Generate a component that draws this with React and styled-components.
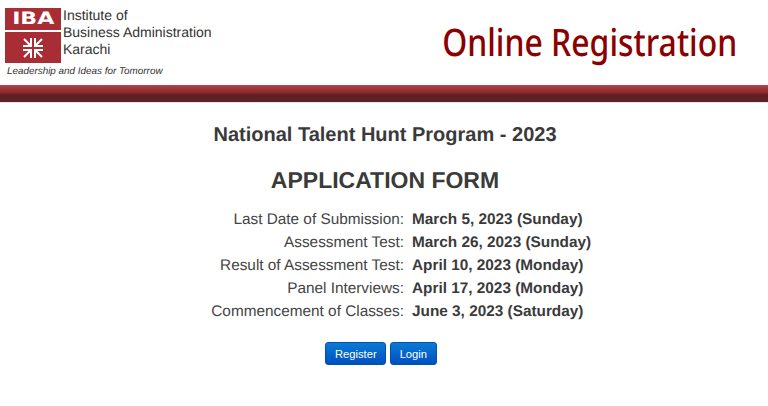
import React from 'react';
import styled, { createGlobalStyle } from 'styled-components';

const GlobalStyle = createGlobalStyle`
  html, body {
    margin: 0;
    padding: 0;
    background: #fff;
  }
  body {
    font-family: "Liberation Sans", Arial, sans-serif;
    color: #333;
    text-rendering: geometricPrecision;
  }
`;

const Page = styled.div`
  width: 768px;
  height: 406px;
  overflow: hidden;
  background: #fff;
`;

const Header = styled.header`
  height: 85px;
  display: flex;
  justify-content: space-between;
  box-sizing: border-box;
  padding: 8px 31px 0 5px;
`;

const Brand = styled.div`
  display: flex;
  flex-direction: column;
`;

const BrandTop = styled.div`
  display: flex;
  gap: 2px;
`;

const LogoMark = styled.div`
  width: 56px;
  height: 55px;
  display: flex;
  flex-direction: column;
  gap: 2px;
`;

const LogoName = styled.div`
  height: 22px;
  background: #a82d35;
  color: #fff;
  font-family: "DejaVu Sans", sans-serif;
  font-size: 17px;
  font-weight: 700;
  line-height: 23px;
  text-align: center;
`;

const LogoLetters = styled.span`
  display: inline-block;
  transform: scaleX(1.3);
`;

const LogoSymbol = styled.div`
  flex: 1;
  background: #a82d35;
  display: flex;
  align-items: center;
  justify-content: center;
`;

const InstituteName = styled.div`
  font-size: 14px;
  line-height: 17px;
  color: #333;
  margin-top: -1px;
`;

const Tagline = styled.div`
  font-size: 9.9px;
  font-style: italic;
  color: #333;
  line-height: 12px;
  margin-top: 3px;
  margin-left: 2px;
`;

const PageTitle = styled.div`
  font-family: "Noto Sans", "Open Sans", sans-serif;
  font-size: 38px;
  font-weight: 500;
  line-height: 52px;
  color: #8b0000;
  margin-top: 8px;
  transform: scaleX(0.84);
  transform-origin: right center;
`;

const Bar = styled.div`
  height: 17px;
  background: linear-gradient(#b84a4a 0, #a53a3a 12%, #8f2c2e 42%, #7a2628 50%, #5e2024 58%, #5f2226 100%);
  border-bottom: 1px solid #e4e4e4;
`;

const Main = styled.main`
  display: flex;
  flex-direction: column;
  align-items: center;
  padding: 20px 0 0 2px;
`;

const ProgramTitle = styled.h2`
  margin: 0;
  font-size: 20px;
  line-height: 24px;
  font-weight: 700;
  color: #3a3a3a;
`;

const FormTitle = styled.h1`
  margin: 19px 0 0;
  font-size: 23px;
  line-height: 28px;
  font-weight: 700;
  color: #3a3a3a;
`;

const Dates = styled.dl`
  display: grid;
  grid-template-columns: 403px 1fr;
  column-gap: 8px;
  row-gap: 0;
  margin: 14px 0 0;
  width: 768px;
  font-size: 15.35px;
  line-height: 23px;
`;

const DateLabel = styled.dt`
  text-align: right;
  color: #444;
`;

const DateValue = styled.dd`
  margin: 0;
  font-weight: 700;
  color: #3a3a3a;
`;

const Actions = styled.div`
  display: flex;
  gap: 4px;
  margin-top: 19px;
  margin-left: -8px;
`;

const Button = styled.button`
  height: 23px;
  padding: 0 8.5px;
  border: 1px solid #0055aa;
  border-radius: 3px;
  background: linear-gradient(#0a7ad6, #0050c0);
  color: #fff;
  font-family: inherit;
  font-size: 11.2px;
  cursor: pointer;
`;

const dates = [
  ['Last Date of Submission:', 'March 5, 2023 (Sunday)'],
  ['Assessment Test:', 'March 26, 2023 (Sunday)'],
  ['Result of Assessment Test:', 'April 10, 2023 (Monday)'],
  ['Panel Interviews:', 'April 17, 2023 (Monday)'],
  ['Commencement of Classes:', 'June 3, 2023 (Saturday)'],
];

const ArrowsIcon = () => (
  <svg width="22" height="20" viewBox="0 0 22 20" fill="none" stroke="#fff" strokeWidth="2">
    <path d="M9 0v8H1M9 8L2 1" />
    <path d="M13 0v8h8M13 8l7-7" />
    <path d="M9 20v-8H1M9 12l-7 7" />
    <path d="M13 20v-8h8M13 12l7 7" />
  </svg>
);

const App = () => (
  <Page>
    <GlobalStyle />
    <Header>
      <Brand>
        <BrandTop>
          <LogoMark>
            <LogoName>
              <LogoLetters>IBA</LogoLetters>
            </LogoName>
            <LogoSymbol>
              <ArrowsIcon />
            </LogoSymbol>
          </LogoMark>
          <InstituteName>
            Institute of
            <br />
            Business Administration
            <br />
            Karachi
          </InstituteName>
        </BrandTop>
        <Tagline>Leadership and Ideas for Tomorrow</Tagline>
      </Brand>
      <PageTitle>Online Registration</PageTitle>
    </Header>
    <Bar />
    <Main>
      <ProgramTitle>National Talent Hunt Program - 2023</ProgramTitle>
      <FormTitle>APPLICATION FORM</FormTitle>
      <Dates>
        {dates.map(([label, value]) => (
          <React.Fragment key={label}>
            <DateLabel>{label}</DateLabel>
            <DateValue>{value}</DateValue>
          </React.Fragment>
        ))}
      </Dates>
      <Actions>
        <Button>Register</Button>
        <Button>Login</Button>
      </Actions>
    </Main>
  </Page>
);

export default App;
